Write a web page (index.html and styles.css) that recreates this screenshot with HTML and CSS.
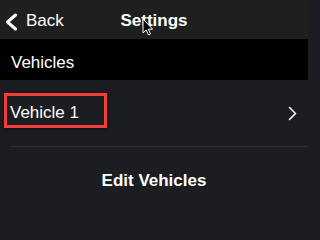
FILE: index.html
```html
<!DOCTYPE html>
<html>
<head>
<meta charset="utf-8">
<link rel="stylesheet" href="styles.css">
</head>
<body>
<div class="screen">
  <header class="nav">
    <div class="back">
      <svg class="back-icon" width="14" height="18" viewBox="0 0 14 18"><path d="M11.5 2 L3.5 9 L11.5 16" fill="none" stroke="#fff" stroke-width="3" stroke-linecap="round" stroke-linejoin="round"/></svg>
      <span>Back</span>
    </div>
    <div class="title">Settings</div>
    <div></div>
    <svg class="cursor" width="12" height="18" viewBox="0 0 12 18"><path d="M1 1 L1 15 L4.2 12 L6.6 17 L8.6 16 L6.3 11.2 L10.6 11.2 Z" fill="#000" stroke="#fff" stroke-width="1" stroke-linejoin="round"/></svg>
  </header>
  <div class="section">Vehicles</div>
  <div class="list">
    <div class="row">
      <div class="highlight">Vehicle 1</div>
      <svg class="chev" width="9" height="15" viewBox="0 0 9 15"><path d="M1.5 1.5 L7.5 7.5 L1.5 13.5" fill="none" stroke="#fff" stroke-width="1.6" stroke-linecap="round" stroke-linejoin="round"/></svg>
    </div>
    <div class="sep"></div>
    <div class="edit">Edit Vehicles</div>
  </div>
</div>
</body>
</html>
```
FILE: styles.css
```css
html, body {
  margin: 0;
  padding: 0;
  background: #1c1d20;
}
.screen {
  width: 308px;
  height: 212px;
  overflow: hidden;
  font-family: "Liberation Sans", Arial, sans-serif;
  font-size: 17px;
  line-height: 20px;
  color: #fff;
  display: flex;
  flex-direction: column;
}
.nav {
  position: relative;
  height: 39px;
  box-sizing: border-box;
  padding-top: 11px;
  background: #1f1f1f;
  display: grid;
  grid-template-columns: 1fr auto 1fr;
  align-items: start;
}
.back {
  display: flex;
  align-items: center;
  gap: 8px;
  padding-left: 4px;
}
.back-icon {
  display: block;
  margin-top: 1px;
}
.title {
  font-weight: bold;
}
.cursor {
  position: absolute;
  left: 142px;
  top: 18px;
}
.section {
  height: 41px;
  box-sizing: border-box;
  padding: 14px 0 0 11px;
  background: #000;
}
.list {
  flex: 1;
  background: #1c1d20;
}
.row {
  display: flex;
  align-items: center;
  justify-content: space-between;
  padding: 13px 11px 18px 4px;
}
.highlight {
  width: 103px;
  box-sizing: border-box;
  height: 35px;
  padding: 7px 0 0 3px;
  border: 3px solid #f03e3e;
  box-shadow: 0 1px 4px rgba(0, 0, 0, 0.5);
}
.chev {
  display: block;
  margin-top: 5px;
}
.sep {
  height: 1px;
  margin-left: 10px;
  background: #2d2e32;
}
.edit {
  margin-top: 24px;
  text-align: center;
  font-weight: bold;
}
```
